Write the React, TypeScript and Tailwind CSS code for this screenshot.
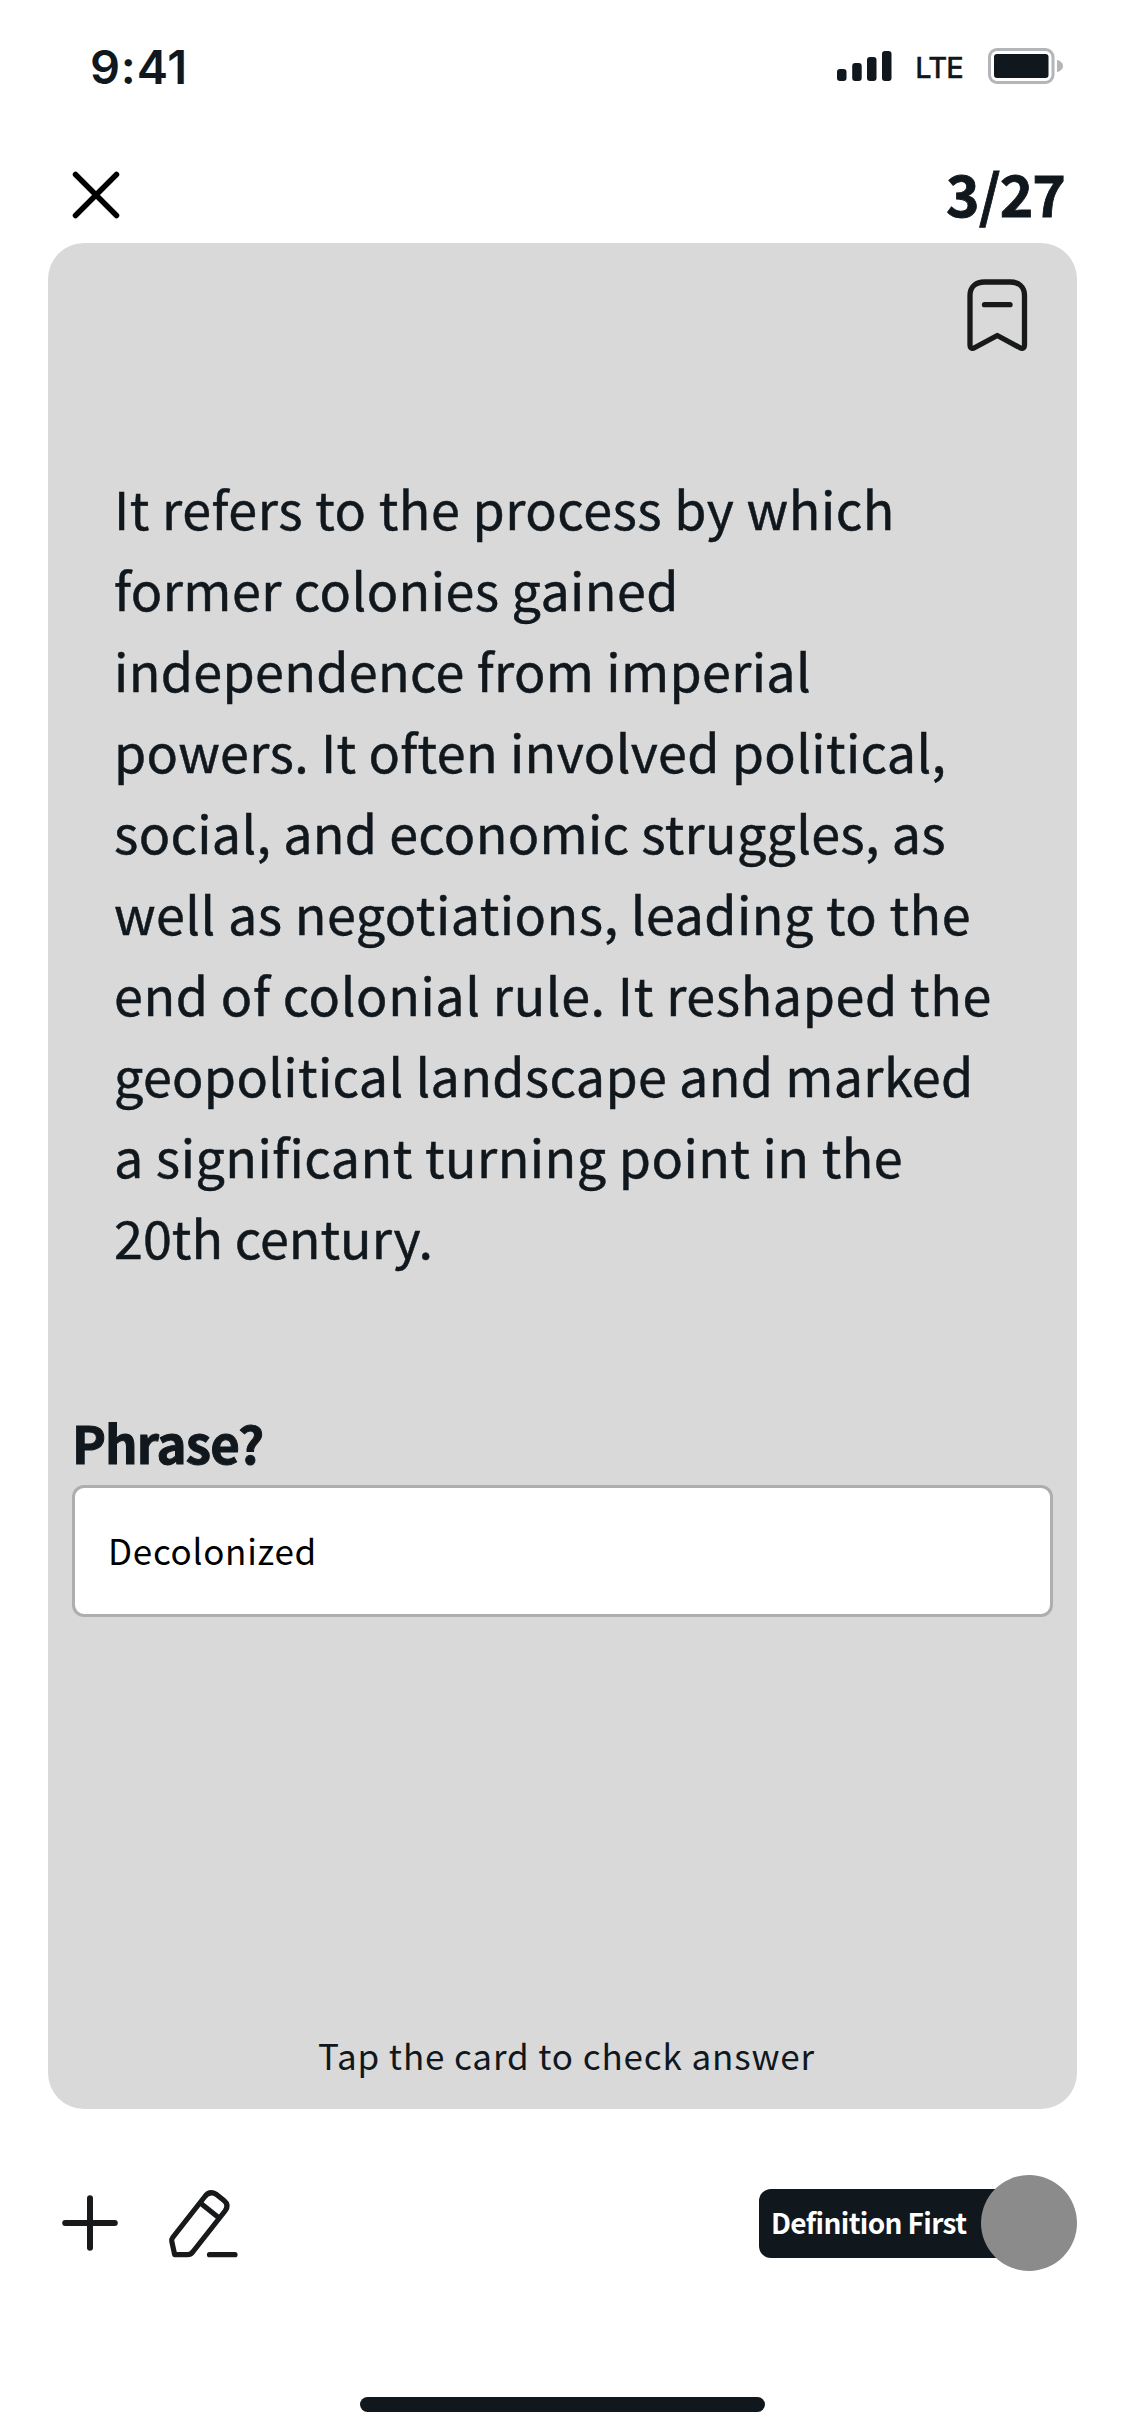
const definitionLines = [
  { text: 'It refers to the process by which', spacing: 'tracking-[0.52px]' },
  { text: 'former colonies gained', spacing: 'tracking-[0.43px]' },
  { text: 'independence from imperial', spacing: 'tracking-[0.34px]' },
  { text: 'powers. It often involved political,', spacing: 'tracking-[0.34px]' },
  { text: 'social, and economic struggles, as', spacing: 'tracking-[0.29px]' },
  { text: 'well as negotiations, leading to the', spacing: 'tracking-[0.5px]' },
  { text: 'end of colonial rule. It reshaped the', spacing: 'tracking-[0.6px]' },
  { text: 'geopolitical landscape and marked', spacing: 'tracking-[0.33px]' },
  { text: 'a significant turning point in the', spacing: 'tracking-[0.47px]' },
  { text: '20th century.', spacing: 'tracking-[0.02px]' },
];

function SignalIcon() {
  return (
    <svg className="h-[30px] w-[55px]" viewBox="0 0 55 30" fill="#10171d">
      <rect x="0" y="18" width="9.5" height="12" rx="3" />
      <rect x="15.2" y="12" width="9.5" height="18" rx="3" />
      <rect x="30" y="6" width="9.5" height="24" rx="3" />
      <rect x="45" y="0" width="9.5" height="30" rx="3" />
    </svg>
  );
}

function BatteryIcon() {
  return (
    <svg className="h-9 w-[76px]" viewBox="0 0 76 36">
      <rect x="1.5" y="1.5" width="63.5" height="33" rx="7.5" fill="none" stroke="#b4b5b9" strokeWidth="3" />
      <rect x="6" y="6" width="54.5" height="24" rx="3" fill="#10171d" />
      <path d="M69 12c3.500 0.800 6 3 6 6s-2.500 5.200 -6 6z" fill="#b4b5b9" />
    </svg>
  );
}

function StatusBar() {
  return (
    <header className="flex h-[132px] items-center justify-between pr-[61px] pl-[90px] text-[#10171d]">
      <span className="pt-0.5 font-['Inter',sans-serif] text-[47px] leading-[60px] font-semibold tracking-[0.8px]">9:41</span>
      <div className="flex items-center">
        <SignalIcon />
        <span className="ml-[23px] pt-[3px] font-['Inter',sans-serif] text-[29px] leading-9 font-medium tracking-[-0.8px] [-webkit-text-stroke:0.3px]">LTE</span>
        <span className="ml-[25px]">
          <BatteryIcon />
        </span>
      </div>
    </header>
  );
}

function CloseIcon() {
  return (
    <svg className="size-12" viewBox="0 0 48 48" fill="none" stroke="#000" strokeWidth="5.5" strokeLinecap="round">
      <path d="M3.500 3.500L44.500 44.500M44.500 3.500L3.500 44.500" />
    </svg>
  );
}

function BookmarkIcon() {
  return (
    <svg className="h-[73px] w-[62px]" viewBox="0 0 62 73" fill="none" stroke="#18191a" strokeWidth="5.3" strokeLinecap="round" strokeLinejoin="round">
      <path d="M4 17.500C4 8.500 10 4 18.500 4H44C52.500 4 58.500 8.500 58.500 17.500V67Q58.500 71.500 54.500 70L31.300 57.500L8 70Q4 71.500 4 67Z" />
      <path d="M18.500 26.700H44" />
    </svg>
  );
}

function PlusIcon() {
  return (
    <svg className="size-14" viewBox="0 0 56 56" fill="none" stroke="#18191b" strokeWidth="6" strokeLinecap="round">
      <path d="M28 3.200V52.800M3.200 28H52.800" />
    </svg>
  );
}

function PencilIcon() {
  return (
    <svg className="size-[74px]" viewBox="0 0 74 74" fill="none" stroke="#18191a" strokeWidth="5.2" strokeLinecap="round" strokeLinejoin="round">
      <path d="M8.700 68.700L5.800 55.500Q5.300 53.300 6.700 51.500L38.500 11Q43.500 4 50.500 8.500L58 14.500Q63.500 19 59 25L27.500 65Q25 68.700 21.500 68.700Z" />
      <path d="M35 17.500L52.500 31.500M43.500 68.700H69" />
    </svg>
  );
}

export default function App() {
  return (
    <div className="flex h-[2436px] w-[1125px] flex-col bg-white font-['Noto_Sans_CJK_SC',sans-serif] text-[#10171d]">
      <StatusBar />

      <div className="flex h-[111px] items-start justify-between pr-[60px] pl-[72px]">
        <button className="mt-[39px]" aria-label="Close">
          <CloseIcon />
        </button>
        <span className="mt-[25px] text-[57px] leading-[70px] font-bold tracking-[-1px] [-webkit-text-stroke:0.8px]">3/27</span>
      </div>

      <main className="mx-12 flex h-[1866px] flex-col rounded-[36px] bg-[#d9d9d9] px-6">
        <div className="flex h-[224px] items-start justify-end pt-[35px] pr-[25px]">
          <BookmarkIcon />
        </div>

        <p className="ml-[42px] text-[52px] leading-[81px] [-webkit-text-stroke:0.5px]">
          {definitionLines.map(({ text, spacing }) => (
            <span key={text} className={`block whitespace-nowrap ${spacing}`}>
              {text}
            </span>
          ))}
        </p>

        <label className="mt-[135px] text-[51px] leading-[60px] font-bold tracking-[-0.9px] [-webkit-text-stroke:1px]">Phrase?</label>
        <div className="mt-[13px] flex h-[132px] items-center rounded-xl border-[3px] border-[#adaeaf] bg-white pb-[3px] pl-[33px] text-[35px] leading-[50px] tracking-[0.71px] text-black">
          Decolonized
        </div>

        <p className="mt-auto mb-[29px] pl-[8px] text-center text-[35px] leading-[50px] tracking-[0.88px]">
          Tap the card to check answer
        </p>
      </main>

      <footer className="mt-[66px] mr-12 ml-[62px] flex h-24 items-center">
        <PlusIcon />
        <span className="ml-12">
          <PencilIcon />
        </span>
        <div className="ml-auto flex items-center">
          <div className="-mr-12 flex h-[69px] w-[270px] items-center rounded-xl bg-[#10171d] pb-[3px] pl-3 text-[28px] leading-10 font-bold tracking-[-0.64px] whitespace-nowrap text-white">
            Definition First
          </div>
          <div className="size-24 rounded-full bg-[#8b8b8b]" />
        </div>
      </footer>

      <div className="mx-auto mt-auto mb-6 h-[15px] w-[405px] rounded-full bg-[#10171d]" />
    </div>
  );
}
